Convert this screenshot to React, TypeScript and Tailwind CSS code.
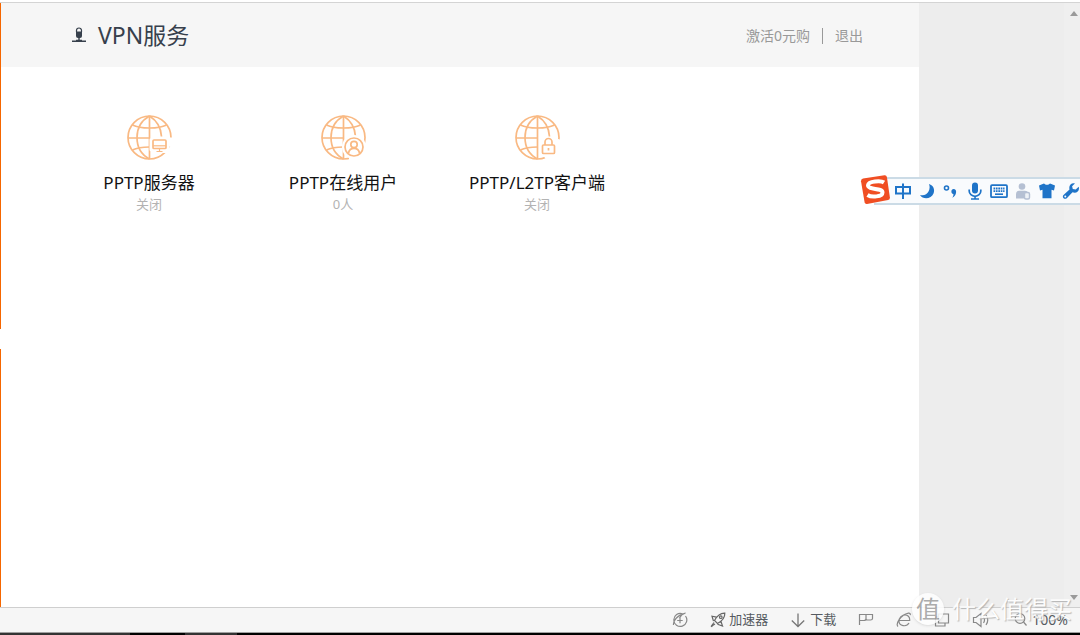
import type { ReactNode } from "react";

type Service = {
  name: string;
  status: string;
  badge: ReactNode;
};

function Globe({ children }: { children: ReactNode }) {
  return (
    <svg
      viewBox="0 0 48 48"
      className="h-12 w-12 text-[#f9b983]"
      fill="none"
      stroke="currentColor"
      strokeWidth="1.7"
      strokeLinejoin="round"
      aria-hidden="true"
    >
      <circle cx="24.500" cy="24.500" r="21.500" />
      <path d="M24.500 3v43M3 25H24.500" />
      <path d="M24.500 3C15.500 8 12 16 12 24.500s3 16.500 12.500 21.500M24.500 3C32.500 8 36 15 36.500 23.500" />
      <path d="M7.500 12C12 14.300 17 15 24.500 15S37 14.300 41.500 12M7.500 37c4.500-2.300 9-3 17-3" />
      {children}
    </svg>
  );
}

function MonitorBadge() {
  return (
    <>
      <path d="M25.500 26.500h18v12.500H31.500l-6-2z" fill="#fff" stroke="#fff" strokeWidth="2" />
      <path d="M42 24.500h6v9h-6zM40 36h8v6l-6 1z" fill="#fff" stroke="none" />
      <rect x="28" y="27" width="13" height="8.500" rx="1" />
      <path d="M28 32.800h13" strokeWidth="1.200" />
      <path d="M34.500 36v2M31.500 38.500h6" strokeWidth="1.200" />
    </>
  );
}

function UserBadge() {
  return (
    <>
      <circle cx="35" cy="34" r="12" fill="#fff" stroke="none" />
      <path d="M30 42h12v6H30z" fill="#fff" stroke="none" />
      <circle cx="35" cy="34" r="9" />
      <circle cx="35" cy="31.500" r="3.200" />
      <path d="M29.500 40c.6-3.200 2.700-4.700 5.500-4.700s4.900 1.500 5.500 4.700" />
    </>
  );
}

function LockBadge() {
  return (
    <>
      <path d="M26.500 27.500 32 24h8l8 3v18l-14 3-3-4.500h-4.500z" fill="#fff" stroke="none" />
      <rect x="29.500" y="32" width="12" height="8.500" rx="1" />
      <path d="M32 32v-3a3.500 3.500 0 0 1 7 0v3M35.500 35v2.500" />
    </>
  );
}

const services: Service[] = [
  { name: "PPTP服务器", status: "关闭", badge: <MonitorBadge /> },
  { name: "PPTP在线用户", status: "0人", badge: <UserBadge /> },
  { name: "PPTP/L2TP客户端", status: "关闭", badge: <LockBadge /> },
];

function Header() {
  return (
    <header className="flex h-16 items-center justify-between bg-[#f6f6f6] pl-[70px] pr-14">
      <h1 className="flex items-center gap-[11px] text-[23px] leading-8 text-[#37404c]">
        <svg viewBox="0 0 16 16" className="h-4 w-4" aria-hidden="true">
          <path d="M5.500 5V3.500a2.500 2.500 0 0 1 5 0V5" fill="none" stroke="currentColor" strokeWidth="1.200" />
          <path d="M5 4.500h6v4.500a2 2 0 0 1-2 2H7a2 2 0 0 1-2-2z" fill="currentColor" />
          <path d="M8 10v3M1 14.200h14M5 13.400h6" stroke="currentColor" strokeWidth="1.400" />
        </svg>
        VPN服务
      </h1>
      <nav className="flex items-center gap-3 pt-0.5 text-sm text-[#999999]">
        <a href="#activate">激活0元购</a>
        <span className="h-4 w-px bg-[#999999]" />
        <a href="#logout">退出</a>
      </nav>
    </header>
  );
}

function ServiceItem({ name, status, badge }: Service) {
  return (
    <button type="button" className="flex w-[194px] flex-col items-center">
      <Globe>{badge}</Globe>
      <span className="mt-[11px] text-[17px] leading-[22px] text-[#111111]">{name}</span>
      <span className="text-[13px] leading-5 text-[#b3b3b3]">{status}</span>
    </button>
  );
}

function ImeToolbar() {
  return (
    <div className="absolute right-0 top-[174px] flex h-8 items-center text-[#1f74c8]">
      <svg viewBox="0 0 32 32" className="relative z-10 h-8 w-8" aria-hidden="true">
        <path d="M4 4.500 25.500 1.200q2-.2 2.400 1.800l3 20.500q.2 2-1.800 2.500L8 30q-2 .3-2.400-1.700L2 7.200q-.2-2.200 2-2.700z" fill="#f04e23" />
        <path
          d="M25 8.500c-3-2-15.500-1.500-16 2.800 0 5 14.500 2.200 14.500 7.200 0 4.500-11 5-15 2.500"
          fill="none"
          stroke="#fff"
          strokeWidth="4"
        />
      </svg>
      <div className="-ml-[17px] mt-0.5 flex h-7 items-center gap-[6px] border-y-2 border-[#cbdbe6] bg-[#f9fbfd] pl-5">
        <svg viewBox="0 0 18 18" className="h-[18px] w-[18px]" fill="none" stroke="currentColor" strokeWidth="2" aria-hidden="true">
          <path d="M2 5h14v6.500H2zM9 1.500V17" />
        </svg>
        <svg viewBox="0 0 18 18" className="h-[18px] w-[18px]" fill="currentColor" aria-hidden="true">
          <path d="M11 2c4.500 1.500 6 5.500 4.500 9.500C13.500 17 5 18 2 13c4 1 7-.5 8.500-3.500C11.800 7 12 4.500 11 2z" />
        </svg>
        <svg viewBox="0 0 18 18" className="h-[18px] w-[18px]" aria-hidden="true">
          <circle cx="4.500" cy="6" r="2" fill="none" stroke="currentColor" strokeWidth="1.600" />
          <path d="M9.500 8.500a2 2 0 0 1 2-1.500c2 0 2.800 1.500 2.600 3.200-.2 2.500-1.500 4.600-3.800 5.500.8-1.200 1.200-2.300 1.100-3.700-1.400 0-2.400-1.500-1.900-3.500z" fill="currentColor" />
        </svg>
        <svg viewBox="0 0 18 18" className="h-[18px] w-[18px]" aria-hidden="true">
          <rect x="6" y="0.500" width="6" height="11" rx="3" fill="currentColor" />
          <path d="M3.200 7.500v1.500a5.800 5.300 0 0 0 11.600 0V7.500M9 14.500V17M5 17h8" fill="none" stroke="currentColor" strokeWidth="1.700" />
        </svg>
        <svg viewBox="0 0 18 18" className="h-[18px] w-[18px]" aria-hidden="true">
          <rect x="1" y="3.200" width="16" height="12" rx="1" fill="none" stroke="currentColor" strokeWidth="1.800" />
          <path d="M3.500 6.500h11M3.500 9.200h11" stroke="currentColor" strokeWidth="1.800" strokeDasharray="1.700 .7" />
          <path d="M5 12.200h8" stroke="currentColor" strokeWidth="1.600" />
        </svg>
        <svg viewBox="0 0 18 18" className="h-[18px] w-[18px] text-[#b5c0d3]" aria-hidden="true">
          <circle cx="8" cy="4.500" r="3.300" fill="currentColor" />
          <path d="M2 16.500v-4.500q0-3 3-3.200h6q2.500 0 3 2v5.700z" fill="currentColor" />
          <rect x="10.500" y="10.500" width="5" height="6.500" rx="1.500" fill="#edf1f6" stroke="currentColor" strokeWidth="1.400" />
        </svg>
        <svg viewBox="0 0 18 18" className="h-[18px] w-[18px]" fill="currentColor" aria-hidden="true">
          <path d="M6 1.500c1.500 1.800 4.500 1.800 6 0l5 2L16 8.500l-2.500-.7v8.400h-9V7.800L2 8.500 1 3.500z" />
        </svg>
        <svg viewBox="0 0 18 18" className="h-[18px] w-[18px]" fill="currentColor" aria-hidden="true">
          <path d="M16.700 4.800 13.700 7.500l-2.900-.6-.7-2.700 2.800-2.800C9.200.6 6.500 3.500 7.500 7.500l-6 5.500c-2 2.500 1 5 3.300 3.300l5.700-6c4 1.500 7.500-1.500 6.200-5.500zM3.300 15.500a1 1 0 1 1 0-2 1 1 0 0 1 0 2z" />
        </svg>
      </div>
    </div>
  );
}

function StatusBar() {
  return (
    <footer className="flex h-[25px] shrink-0 items-center justify-end border-t border-[#cfcfcf] bg-[#f6f6f6] pr-3 text-[13px] text-[#555a60]">
      <button type="button" aria-label="加速球" className="mr-[22px]">
        <svg viewBox="0 0 16 16" className="h-4 w-4" fill="none" stroke="#888" strokeWidth="1.200">
          <path d="M13.500 4a6.500 6.500 0 1 1-3-2.200M1.500 13C1 9 5 3 13.500 1c-3 1-5 3-6 5M5.200 8.500h5.500M8 5.800v5.400" />
        </svg>
      </button>
      <button type="button" className="mr-[22px] flex items-center gap-[3px]">
        <svg viewBox="0 0 16 16" className="h-4 w-4" fill="none" stroke="#666" strokeWidth="1.200" aria-hidden="true">
          <path d="M14.800 1.200C10 1 7 4 4.500 8.500l3 3C12 9 15 6 14.800 1.200zM6.500 5.200 2 4.200l1.500 5M11 9.500l1.500 4.500-5-1.800M4 10.500l-3 4 4-2.500M3 13l-1.500 2" />
          <circle cx="10.800" cy="5.200" r="1.300" />
        </svg>
        加速器
      </button>
      <button type="button" className="mr-[22px] flex items-center gap-1">
        <svg viewBox="0 0 16 16" className="h-4 w-4" fill="none" stroke="#777" strokeWidth="1.300" aria-hidden="true">
          <path d="M8 1.500v13M1.800 8.500 8 14.500l6.200-6" />
        </svg>
        下载
      </button>
      <button type="button" aria-label="书签" className="mr-[22px]">
        <svg viewBox="0 0 16 16" className="h-4 w-4" fill="none" stroke="#888" strokeWidth="1.200">
          <path d="M1.500 13V2.500h13v4q0 1.500-2 1.500H9.500Q8 8 8 6.500v-4M1.500 8.500H6Q8 8.500 8 6.500" />
        </svg>
      </button>
      <button type="button" aria-label="浏览器模式" className="mr-[22px]">
        <svg viewBox="0 0 16 16" className="h-4 w-4" fill="none" stroke="#888" strokeWidth="1.200">
          <path d="M3.500 8.500h10.200C14 4.500 11.500 3 9 3 5.500 3 3 6 3 9.200 3 14 10.500 15.500 13 11M2 14.500C-.5 12 4 3 12.500 1.200c1.500-.2 2 .5 1.700 2" />
        </svg>
      </button>
      <button type="button" aria-label="窗口" className="mr-[22px]">
        <svg viewBox="0 0 16 16" className="h-4 w-4" fill="none" stroke="#888" strokeWidth="1.200">
          <path d="M4.500 2h10v9h-10zM4.500 5H1.500v9H11v-3" />
        </svg>
      </button>
      <button type="button" aria-label="声音" className="mr-[22px]">
        <svg viewBox="0 0 18 16" className="h-4 w-[18px]" fill="none" stroke="#888" strokeWidth="1.200">
          <path d="M1.500 5.500H4l5-4v13l-5-4H1.500zM11.500 5q2 3 0 6M14 3q3.500 5 0 10" />
        </svg>
      </button>
      <button type="button" className="flex items-center gap-1">
        <svg viewBox="0 0 16 16" className="h-4 w-4" fill="none" stroke="#888" strokeWidth="1.200" aria-hidden="true">
          <circle cx="8" cy="6.500" r="4.800" />
          <path d="m11.500 10 3 3.500" />
        </svg>
        <span className="text-sm">100%</span>
      </button>
    </footer>
  );
}

function Watermark() {
  return (
    <div className="pointer-events-none absolute bottom-2 right-2 flex items-center gap-2 text-white opacity-85">
      <span className="flex h-8 w-8 items-center justify-center rounded-full bg-white text-2xl text-[#a0a0a0] shadow-sm">值</span>
      <span className="text-2xl leading-9 [text-shadow:1px_1px_1px_#aaaaaa]">什么值得买</span>
    </div>
  );
}

export default function App() {
  return (
    <div className="relative flex min-h-screen flex-col overflow-hidden bg-white pt-0.5 font-['Noto_Sans','Noto_Sans_CJK_SC',sans-serif]">
      <div className="flex flex-1 border-t border-[#d4d4d4]">
        <div className="flex w-px flex-col">
          <div className="flex-[326] bg-[#f56600]" />
          <div className="h-5" />
          <div className="flex-[258] bg-[#f56600]" />
        </div>
        <main className="min-w-0 flex-1">
          <Header />
          <section className="flex flex-wrap pl-[51px] pt-[46px]">
            {services.map((s) => (
              <ServiceItem key={s.name} {...s} />
            ))}
          </section>
        </main>
        <aside className="flex w-[161px] justify-end bg-[#ededed]">
          <div className="flex w-4 flex-col items-center justify-between bg-[#efefef] pb-[7px] pl-1 pt-2">
            <svg viewBox="0 0 8 5" className="h-[5px] w-2" fill="#9a9a9a" aria-hidden="true">
              <path d="M4 0 8 5H0z" />
            </svg>
            <svg viewBox="0 0 8 5" className="h-[5px] w-2" fill="#9a9a9a" aria-hidden="true">
              <path d="M0 0h8L4 5z" />
            </svg>
          </div>
        </aside>
      </div>
      <StatusBar />
      <div className="flex h-[3px] shrink-0 border-t border-[#a0a0a0] bg-black">
        <div className="w-[130px] bg-[#333333]" />
        <div className="ml-[55px] w-[52px] bg-[#333333]" />
      </div>
      <ImeToolbar />
      <Watermark />
    </div>
  );
}
